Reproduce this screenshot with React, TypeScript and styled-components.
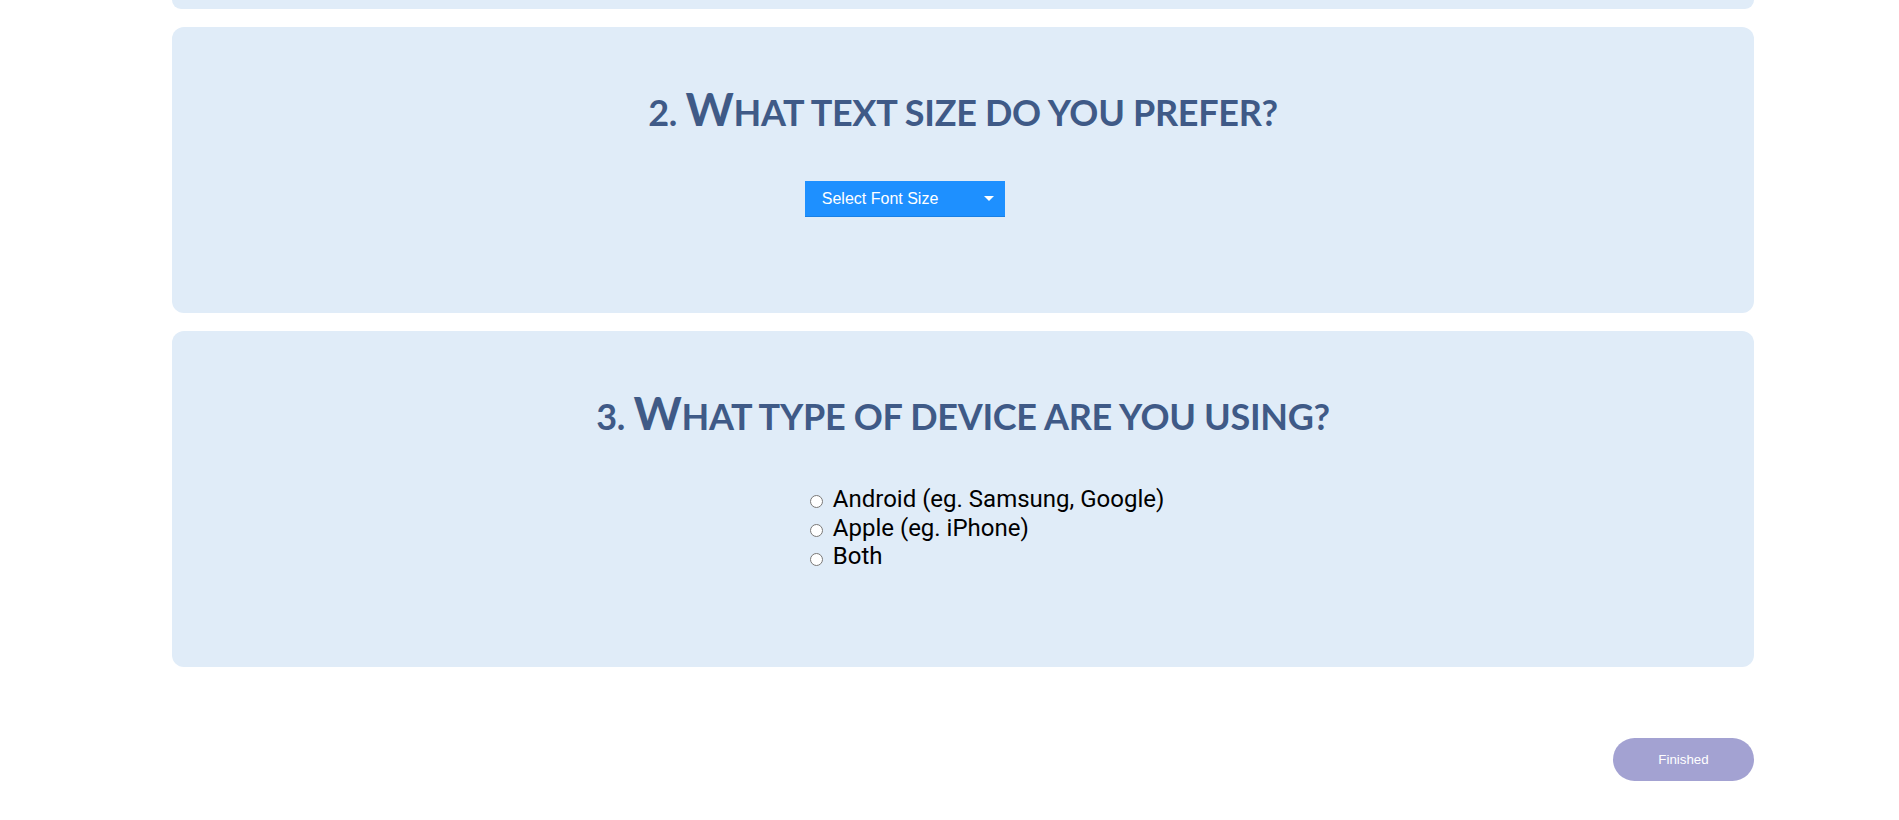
import React from "react";
import styled, { createGlobalStyle } from "styled-components";

const GlobalStyle = createGlobalStyle`
  html, body {
    margin: 0;
    padding: 0;
    background: #ffffff;
  }
  body {
    font-family: "Liberation Sans", Arial, sans-serif;
  }
`;

const Page = styled.main`
  display: flex;
  flex-direction: column;
  gap: 18px;
  margin: 0 145px 0 172px;
  padding-bottom: 40px;
`;

const Card = styled.section<{ $clipped?: boolean }>`
  background: #e0ecf8;
  border-radius: ${(p) => (p.$clipped ? "0 0 12px 12px" : "12px")};
  height: ${(p) => (p.$clipped ? "9px" : "auto")};
  padding: ${(p) => (p.$clipped ? "0" : "60px 0 96px")};
  display: flex;
  flex-direction: column;
  gap: 46.5px;
`;

const Title = styled.h2`
  margin: 0;
  text-align: center;
  font-family: Lato, "Open Sans", sans-serif;
  font-weight: 700;
  font-size: 36px;
  line-height: 44px;
  letter-spacing: -0.3px;
  color: #3f5a87;
  text-transform: uppercase;
`;

const Initial = styled.span`
  font-size: 46px;
`;

const Content = styled.div`
  padding-left: 40%;
`;

const SelectWrap = styled.div`
  position: relative;
  width: 200px;
  height: 36px;
  &::after {
    content: "";
    position: absolute;
    right: 11px;
    top: 15px;
    border-left: 5px solid transparent;
    border-right: 5px solid transparent;
    border-top: 5px solid #ffffff;
    pointer-events: none;
  }
`;

const Select = styled.select`
  appearance: none;
  -webkit-appearance: none;
  width: 200px;
  height: 36px;
  margin: 0;
  padding: 0 30px 0 17px;
  border: none;
  border-bottom: 1px solid #1a80e4;
  border-radius: 0;
  background: #1e90ff;
  color: #ffffff;
  font-family: "Liberation Sans", Arial, sans-serif;
  font-size: 16px;
  outline: none;
`;

const RadioList = styled.div`
  display: flex;
  flex-direction: column;
  margin-top: 1px;
`;

const RadioRow = styled.label`
  display: flex;
  align-items: center;
  gap: 10px;
  font-family: Roboto, sans-serif;
  font-size: 24px;
  line-height: 28.7px;
  color: #000000;
`;

const Radio = styled.input`
  width: 13px;
  height: 13px;
  margin: 5px 0 0 5px;
`;

const Footer = styled.div`
  display: flex;
  justify-content: flex-end;
  padding-top: 53px;
`;

const FinishButton = styled.button`
  width: 141px;
  height: 43px;
  border: none;
  border-radius: 22px;
  background: #a3a2d2;
  color: #ffffff;
  font-family: "Liberation Sans", Arial, sans-serif;
  font-size: 13.33px;
  cursor: pointer;
`;

const devices = [
  "Android (eg. Samsung, Google)",
  "Apple (eg. iPhone)",
  "Both",
];

export default function App() {
  return (
    <>
      <GlobalStyle />
      <Page>
        <Card $clipped />
        <Card>
          <Title>
            2. <Initial>W</Initial>hat text size do you prefer?
          </Title>
          <Content>
            <SelectWrap>
              <Select defaultValue="">
                <option value="" disabled>
                  Select Font Size
                </option>
                <option value="small">Small</option>
                <option value="medium">Medium</option>
                <option value="large">Large</option>
              </Select>
            </SelectWrap>
          </Content>
        </Card>
        <Card>
          <Title>
            3. <Initial>W</Initial>hat type of device are you using?
          </Title>
          <Content>
            <RadioList>
              {devices.map((d) => (
                <RadioRow key={d}>
                  <Radio type="radio" name="device" value={d} />
                  {d}
                </RadioRow>
              ))}
            </RadioList>
          </Content>
        </Card>
        <Footer>
          <FinishButton type="button">Finished</FinishButton>
        </Footer>
      </Page>
    </>
  );
}
